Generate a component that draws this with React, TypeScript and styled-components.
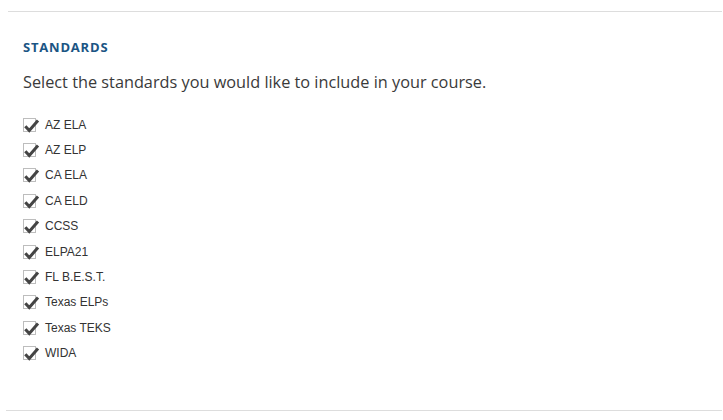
import * as React from 'react';
import styled, { createGlobalStyle } from 'styled-components';

const GlobalStyle = createGlobalStyle`
  body {
    margin: 0;
    background: #ffffff;
  }
`;

const Divider = styled.hr<{ $inset: number; $top: number }>`
  margin: ${(p) => p.$top}px 1px 0 ${(p) => p.$inset}px;
  height: 1px;
  border: 0;
  background: #dddddd;
`;

const Section = styled.section`
  padding: 0 0 0 23px;
`;

const Heading = styled.h2`
  margin: 27px 0 0;
  font-family: 'Open Sans', sans-serif;
  font-size: 13px;
  font-weight: 700;
  line-height: 16px;
  color: #1b5584;
  letter-spacing: 0.8px;
`;

const Intro = styled.p`
  margin: 16px 0 0;
  font-family: 'Open Sans', sans-serif;
  font-size: 16.3px;
  line-height: 22px;
  color: #3a3a3a;
`;

const List = styled.ul`
  margin: 19px 0 0;
  padding: 0;
  list-style: none;
`;

const Item = styled.li`
  display: flex;
  align-items: center;
  height: 25.4px;
`;

const Box = styled.span`
  position: relative;
  flex: none;
  width: 11px;
  height: 12px;
  border: 1px solid #bdbdbd;
  margin-right: 9px;
`;

const Check = styled.svg`
  position: absolute;
  left: -1px;
  top: -1px;
  overflow: visible;
`;

const Label = styled.span`
  font-family: 'Liberation Sans', Arial, sans-serif;
  font-size: 12px;
  color: #333333;
`;

const standards = [
  'AZ ELA',
  'AZ ELP',
  'CA ELA',
  'CA ELD',
  'CCSS',
  'ELPA21',
  'FL B.E.S.T.',
  'Texas ELPs',
  'Texas TEKS',
  'WIDA',
];

const App: React.FC = () => (
  <>
    <GlobalStyle />
    <Divider $inset={8} $top={11} />
    <Section>
      <Heading>STANDARDS</Heading>
      <Intro>Select the standards you would like to include in your course.</Intro>
      <List>
        {standards.map((name) => (
          <Item key={name}>
            <Box>
              <Check width="13" height="13" viewBox="0 0 13 13">
                <path
                  d="M2.3 8.2 L6.3 12.6 L15 2.6"
                  fill="none"
                  stroke="#444444"
                  strokeWidth="3"
                />
              </Check>
            </Box>
            <Label>{name}</Label>
          </Item>
        ))}
      </List>
    </Section>
    <Divider $inset={6} $top={44} />
  </>
);

export default App;
